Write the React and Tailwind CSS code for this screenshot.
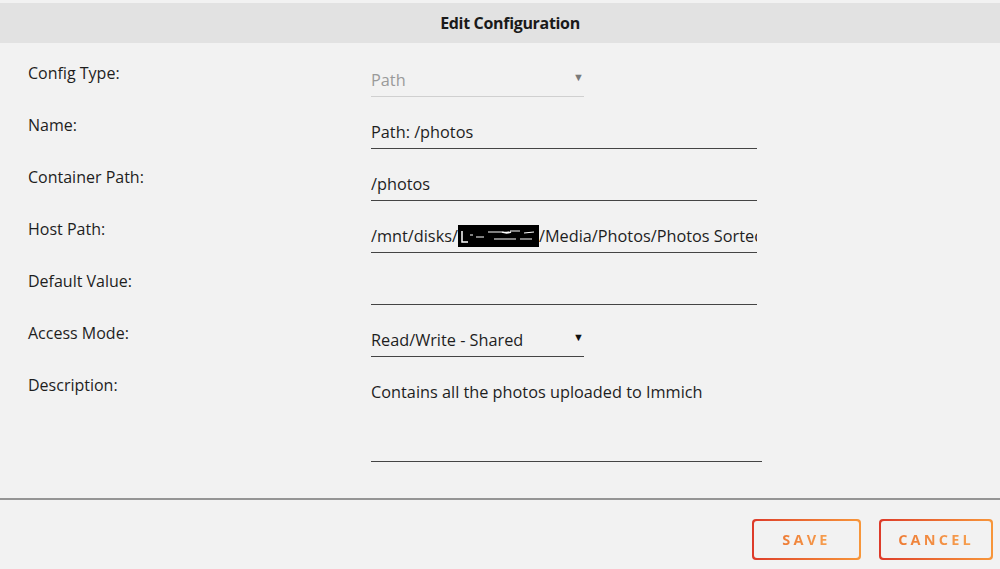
import React from 'react';

const font = "font-['Open_Sans','Noto_Sans',sans-serif]";

const fields = [
  { label: 'Name:', value: 'Path: /photos' },
  { label: 'Container Path:', value: '/photos' },
];

function Label({ children }) {
  return <div className="pt-[4px] leading-6 text-[16px] text-[#1e1e1e]">{children}</div>;
}

function TextInput({ children, width = 'w-[386px]' }) {
  return (
    <div className={`${width} pt-[11px] pb-[4px] leading-6 text-[16.3px] text-[#1e1e1e] border-b border-[#444] whitespace-nowrap overflow-hidden`}>
      {children || '\u00a0'}
    </div>
  );
}

function Select({ value, muted }) {
  return (
    <div
      className={`w-[213px] pt-[11px] pb-[4px] leading-6 text-[16.3px] flex items-center justify-between border-b ${
        muted ? 'border-[#d0d0d0] text-[#9a9a9a]' : 'border-[#444] text-[#1e1e1e]'
      }`}
    >
      <span>{value}</span>
      <span className={`text-[11px] -mt-[6px] ${muted ? 'text-[#7a7a7a]' : 'text-[#111]'}`}>▼</span>
    </div>
  );
}

// black marker over the share name, with a few white strokes left showing through
function Redacted() {
  return (
    <span className="inline-block align-middle w-[81px] h-[22px] bg-black -mt-[3px]">
      <svg width="81" height="22" viewBox="0 0 81 22">
        <path d="M4 6v11h6" stroke="#fff" strokeWidth="1.5" fill="none" />
        <path d="M12 10l3 0M18 12h8M30 7h14M52 6h10M36 14h22M62 14h12M66 8l10-1" stroke="#fff" strokeWidth="1.2" fill="none" />
        <path d="M44 7c3 1 6 1 9 0" stroke="#fff" strokeWidth="1.8" fill="none" />
      </svg>
    </span>
  );
}

function Row({ label, children, height = 'h-[52px]' }) {
  return (
    <div className={`grid grid-cols-[343px_1fr] ${height}`}>
      <Label>{label}</Label>
      <div>{children}</div>
    </div>
  );
}

function GradientButton({ children, width }) {
  return (
    <div className={`${width} h-[41px] rounded-[4px] p-[2px] bg-gradient-to-r from-[#dd3a2a] to-[#f7963a]`}>
      <div className="w-full h-full rounded-[3px] bg-[#f2f2f2] flex items-center justify-center">
        <span className="text-[14.5px] font-bold tracking-[0.22em] bg-gradient-to-r from-[#ee7c35] to-[#f6a050] bg-clip-text text-transparent">
          {children}
        </span>
      </div>
    </div>
  );
}

export default function App() {
  return (
    <div className={`w-[1000px] h-[569px] bg-[#f2f2f2] ${font} overflow-hidden`}>
      <div className="pt-[3px]">
        <div className="h-[40px] bg-[#e2e2e2] flex items-center justify-center pl-[20px]">
          <h2 className="text-[16px] font-bold text-[#1a1a1a] tracking-[-0.02em]">Edit Configuration</h2>
        </div>
      </div>

      <div className="pl-[28px] pt-[14px]">
        <Row label="Config Type:">
          <Select value="Path" muted />
        </Row>
        {fields.map((f) => (
          <Row key={f.label} label={f.label}>
            <TextInput>{f.value}</TextInput>
          </Row>
        ))}
        <Row label="Host Path:">
          <TextInput>
            /mnt/disks/
            <Redacted />
            /Media/Photos/Photos Sorted
          </TextInput>
        </Row>
        <Row label="Default Value:">
          <TextInput />
        </Row>
        <Row label="Access Mode:">
          <Select value="Read/Write - Shared" />
        </Row>
        <Row label="Description:" height="h-[93px]">
          <div className="w-[391px] h-[93px] pt-[11px] leading-6 text-[16.3px] text-[#1e1e1e] border-b border-[#444]">
            Contains all the photos uploaded to Immich
          </div>
        </Row>
      </div>

      <div className="mt-[36px] h-[2px] bg-[#959595]" />

      <div className="flex justify-end gap-[18px] pr-[7px] pt-[19px]">
        <GradientButton width="w-[109px]">SAVE</GradientButton>
        <GradientButton width="w-[114px]">CANCEL</GradientButton>
      </div>
    </div>
  );
}
